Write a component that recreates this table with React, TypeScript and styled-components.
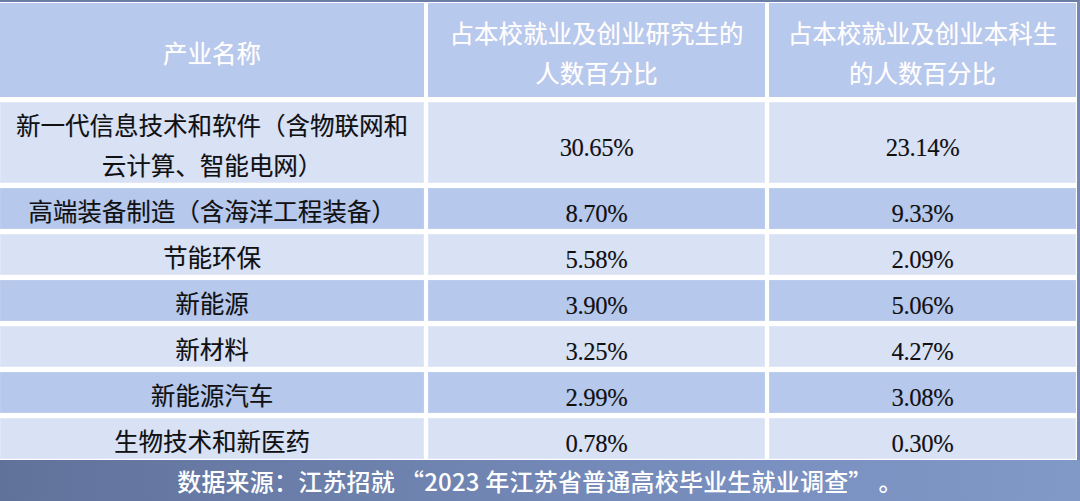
import React from "react";
import styled, { createGlobalStyle } from "styled-components";

const GlobalStyle = createGlobalStyle`
  html, body {
    margin: 0;
    padding: 0;
    background: #ffffff;
  }
  * { box-sizing: border-box; }
`;

const Page = styled.div`
  width: 1080px;
  height: 501px;
  overflow: hidden;
  background: #ffffff;
  display: flex;
  flex-direction: column;
`;

const Table = styled.div`
  display: grid;
  grid-template-columns: 424px 337px 307px;
  grid-template-rows: 94px 81px repeat(6, 41px);
  column-gap: 4px;
  row-gap: 5px;
  border-top: 2px solid #6b7ea6;
  border-right: 3px solid #7488b4;
  padding-top: 1px;
  padding-right: 1px;
  padding-bottom: 1px;
`;

const cjk = `"Noto Sans CJK SC", "Noto Sans", sans-serif`;

const HeadCell = styled.div`
  background: #b7c9ec;
  color: #ffffff;
  font-family: ${cjk};
  font-size: 24.5px;
  line-height: 40px;
  text-align: center;
  display: flex;
  align-items: center;
  justify-content: center;
  padding-top: 5px;
  text-shadow: 0 0 1px rgba(255, 235, 245, 0.6);
`;

const Cell = styled.div<{ $dark: boolean; $num?: boolean }>`
  background: ${(p) => (p.$dark ? "#b6c8eb" : "#d9e2f4")};
  box-shadow: inset 0 0 0 1px ${(p) => (p.$dark ? "#bccdee" : "#e0e7f6")};
  color: #111111;
  font-family: ${(p) =>
    p.$num ? `"Liberation Serif", "Times New Roman", serif` : cjk};
  font-size: 24.5px;
  letter-spacing: ${(p) => (p.$num ? "-0.3px" : "0")};
  line-height: 40px;
  text-align: center;
  display: flex;
  align-items: center;
  justify-content: center;
  padding-top: ${(p) => (p.$num ? "10px" : "5px")};
  text-shadow: 0.4px 0.4px 0.6px rgba(40, 40, 90, 0.35);
`;

const Footer = styled.div`
  flex: 1;
  display: flex;
  align-items: center;
  justify-content: center;
  background: linear-gradient(to right, #61729a, #7990c0 70%, #8199c7);
  color: #ffffff;
  font-family: ${cjk};
  font-size: 24px;
  font-weight: 500;
  letter-spacing: 0.2px;
`;

const Quote = styled.span<{ $close?: boolean }>`
  margin-left: ${(p) => (p.$close ? "0" : "5px")};
  margin-right: ${(p) => (p.$close ? "6px" : "0")};
`;

type Row = { name: React.ReactNode; grad: string; under: string };

const rows: Row[] = [
  {
    name: (
      <>
        新一代信息技术和软件（含物联网和
        <br />
        云计算、智能电网）
      </>
    ),
    grad: "30.65%",
    under: "23.14%",
  },
  { name: "高端装备制造（含海洋工程装备）", grad: "8.70%", under: "9.33%" },
  { name: "节能环保", grad: "5.58%", under: "2.09%" },
  { name: "新能源", grad: "3.90%", under: "5.06%" },
  { name: "新材料", grad: "3.25%", under: "4.27%" },
  { name: "新能源汽车", grad: "2.99%", under: "3.08%" },
  { name: "生物技术和新医药", grad: "0.78%", under: "0.30%" },
];

export default function App() {
  return (
    <>
      <GlobalStyle />
      <Page>
        <Table>
          <HeadCell>产业名称</HeadCell>
          <HeadCell>
            <span>
              占本校就业及创业研究生的
              <br />
              人数百分比
            </span>
          </HeadCell>
          <HeadCell>
            <span>
              占本校就业及创业本科生
              <br />
              的人数百分比
            </span>
          </HeadCell>
          {rows.map((r, i) => {
            const dark = i % 2 === 1;
            return (
              <React.Fragment key={i}>
                <Cell $dark={dark}>
                  <span>{r.name}</span>
                </Cell>
                <Cell $dark={dark} $num>
                  {r.grad}
                </Cell>
                <Cell $dark={dark} $num>
                  {r.under}
                </Cell>
              </React.Fragment>
            );
          })}
        </Table>
        <Footer>
          数据来源：江苏招就<Quote>“</Quote>2023 年江苏省普通高校毕业生就业调查
          <Quote $close>”</Quote>。
        </Footer>
      </Page>
    </>
  );
}
